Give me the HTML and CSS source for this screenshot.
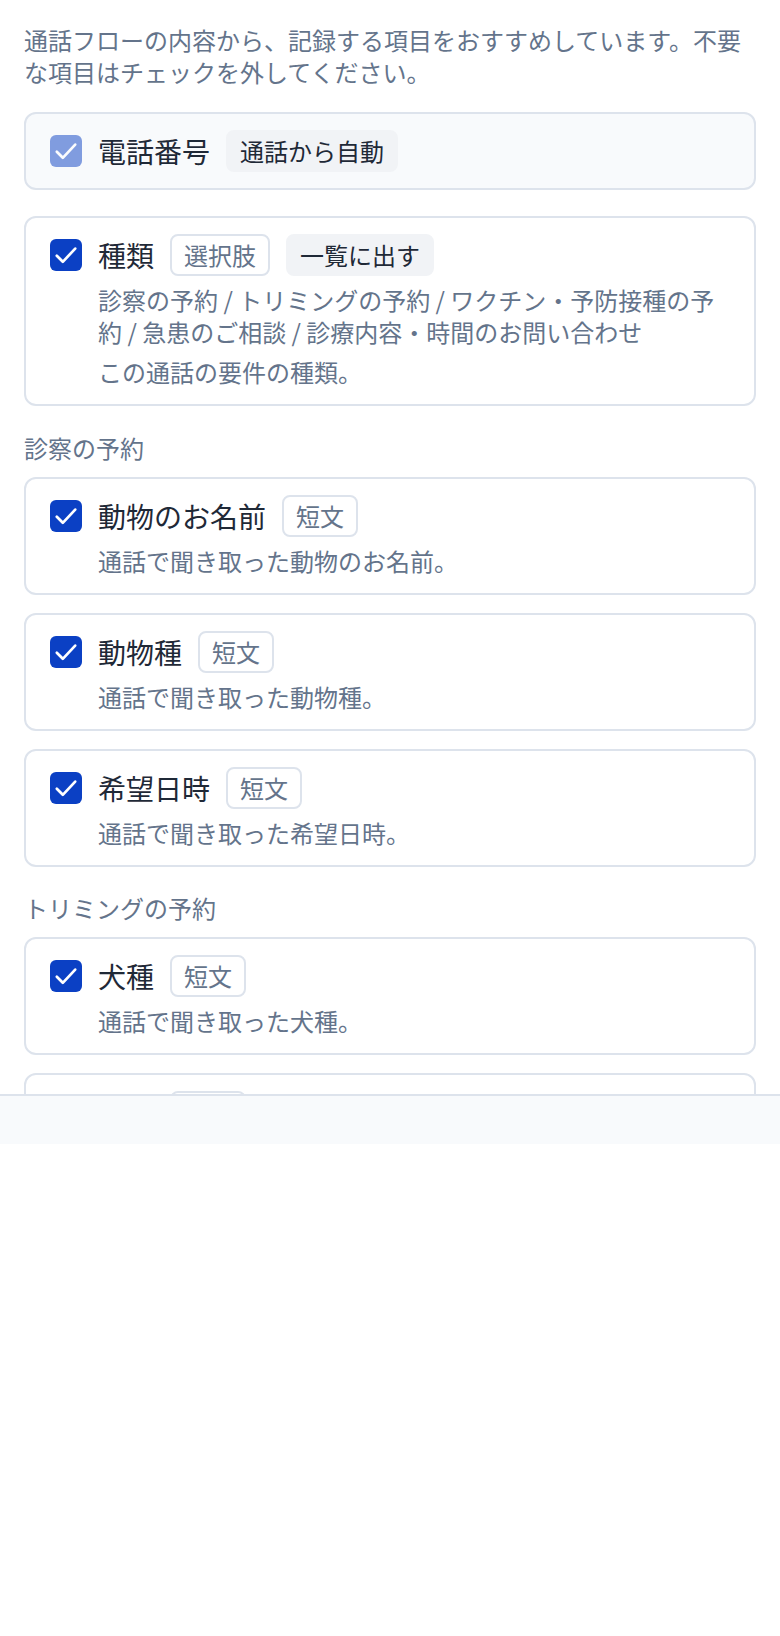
FILE: index.html
```html
<!DOCTYPE html>
<html lang="ja">
<head>
<meta charset="utf-8">
<title>記録する項目</title>
<link rel="stylesheet" href="styles.css">
</head>
<body>
<div class="app">
  <main class="scroll">
    <p class="intro">通話フローの内容から、記録する項目をおすすめしています。不要な項目はチェックを外してください。</p>

    <div class="card card-auto">
      <span class="check check-disabled"><svg viewBox="0 0 16 16"><polyline points="3.4,8.4 6.4,11.4 12.6,4.8"/></svg></span>
      <div class="body">
        <div class="head"><span class="label">電話番号</span><span class="tag tag-fill">通話から自動</span></div>
      </div>
    </div>

    <div class="card card-type">
      <span class="check"><svg viewBox="0 0 16 16"><polyline points="3.4,8.4 6.4,11.4 12.6,4.8"/></svg></span>
      <div class="body">
        <div class="head"><span class="label">種類</span><span class="tag">選択肢</span><span class="tag tag-fill">一覧に出す</span></div>
        <p class="options">診察の予約 / トリミングの予約 / ワクチン・予防接種の予約 / 急患のご相談 / 診療内容・時間のお問い合わせ</p>
        <p class="desc">この通話の要件の種類。</p>
      </div>
    </div>

    <section class="group">
      <h2 class="group-title">診察の予約</h2>
      <div class="cards">
        <div class="card">
          <span class="check"><svg viewBox="0 0 16 16"><polyline points="3.4,8.4 6.4,11.4 12.6,4.8"/></svg></span>
          <div class="body">
            <div class="head"><span class="label">動物のお名前</span><span class="tag">短文</span></div>
            <p class="desc">通話で聞き取った動物のお名前。</p>
          </div>
        </div>
        <div class="card">
          <span class="check"><svg viewBox="0 0 16 16"><polyline points="3.4,8.4 6.4,11.4 12.6,4.8"/></svg></span>
          <div class="body">
            <div class="head"><span class="label">動物種</span><span class="tag">短文</span></div>
            <p class="desc">通話で聞き取った動物種。</p>
          </div>
        </div>
        <div class="card">
          <span class="check"><svg viewBox="0 0 16 16"><polyline points="3.4,8.4 6.4,11.4 12.6,4.8"/></svg></span>
          <div class="body">
            <div class="head"><span class="label">希望日時</span><span class="tag">短文</span></div>
            <p class="desc">通話で聞き取った希望日時。</p>
          </div>
        </div>
      </div>
    </section>

    <section class="group">
      <h2 class="group-title">トリミングの予約</h2>
      <div class="cards">
        <div class="card">
          <span class="check"><svg viewBox="0 0 16 16"><polyline points="3.4,8.4 6.4,11.4 12.6,4.8"/></svg></span>
          <div class="body">
            <div class="head"><span class="label">犬種</span><span class="tag">短文</span></div>
            <p class="desc">通話で聞き取った犬種。</p>
          </div>
        </div>
        <div class="card">
          <span class="check"><svg viewBox="0 0 16 16"><polyline points="3.4,8.4 6.4,11.4 12.6,4.8"/></svg></span>
          <div class="body">
            <div class="head"><span class="label">体重</span><span class="tag">短文</span></div>
            <p class="desc">通話で聞き取った体重。</p>
          </div>
        </div>
      </div>
    </section>
  </main>
  <footer class="footer"></footer>
</div>
</body>
</html>
```

FILE: styles.css
```css
* {
  box-sizing: border-box;
}

html, body {
  margin: 0;
  padding: 0;
  background: #ffffff;
}

body {
  font-family: "Noto Sans CJK JP", "Noto Sans", sans-serif;
  color: #1f2937;
}

.app {
  width: 780px;
  height: 1144px;
  display: flex;
  flex-direction: column;
}

.scroll {
  flex: 1;
  overflow: hidden;
  padding: 24px 24px 0;
}

.intro {
  margin: 0 0 24px;
  font-size: 24px;
  line-height: 32px;
  color: #64748b;
}

.card {
  display: flex;
  align-items: flex-start;
  gap: 16px;
  padding: 16px 24px;
  border: 2px solid #dde3ec;
  border-radius: 12px;
  background: #ffffff;
}

.card-auto {
  background: #f8fafc;
  margin-bottom: 26px;
}

.card-type {
  margin-bottom: 26px;
}

.check {
  flex: none;
  width: 32px;
  height: 32px;
  margin-top: 5px;
  border-radius: 6px;
  background: #0b40c4;
  display: flex;
  align-items: center;
  justify-content: center;
}

.check svg {
  width: 32px;
  height: 32px;
  fill: none;
  stroke: #ffffff;
  stroke-width: 1.35;
  stroke-linecap: round;
  stroke-linejoin: round;
}

.check-disabled {
  opacity: 0.5;
}

.body {
  flex: 1;
  min-width: 0;
}

.head {
  display: flex;
  align-items: center;
  gap: 16px;
  min-height: 42px;
}

.label {
  font-size: 28px;
  line-height: 40px;
  color: #1f2937;
}

.tag {
  font-size: 24px;
  line-height: 32px;
  padding: 3px 12px;
  border: 2px solid #dde3ec;
  border-radius: 8px;
  color: #64748b;
  background: #ffffff;
}

.tag-fill {
  background: #f1f3f6;
  border-color: #f1f3f6;
  color: #1f2937;
}

.options {
  margin: 8px 0 0;
  font-size: 24px;
  line-height: 32px;
  color: #64748b;
}

.desc {
  margin: 8px 0 0;
  font-size: 24px;
  line-height: 32px;
  color: #64748b;
}

.group {
  margin-bottom: 25px;
}

.group-title {
  margin: 0 0 13px;
  font-size: 24px;
  line-height: 32px;
  font-weight: 400;
  color: #64748b;
}

.cards {
  display: flex;
  flex-direction: column;
  gap: 18px;
}

.footer {
  flex: none;
  height: 50px;
  background: #f8fafc;
  border-top: 2px solid #dde3ec;
}
```
